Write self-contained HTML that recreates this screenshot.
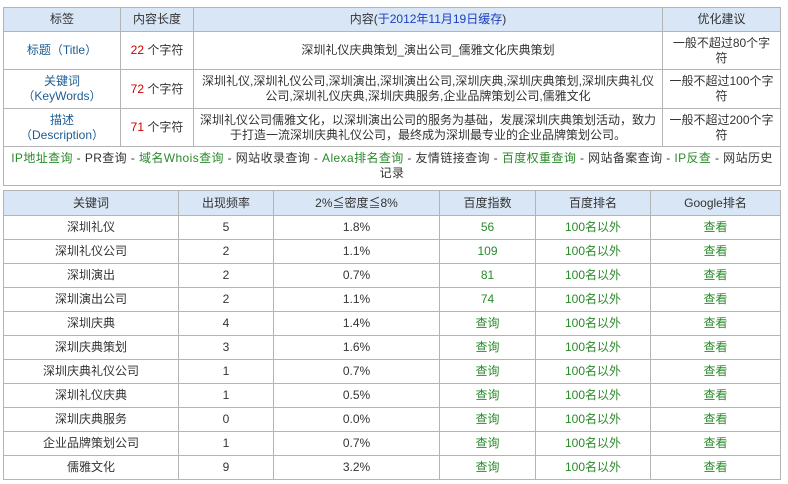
<!DOCTYPE html>
<html><head><meta charset="utf-8"><style>
body{margin:0;background:#fff;font-family:"Liberation Sans","Noto Sans CJK SC",sans-serif;font-size:12px;color:#333}
table{border-collapse:collapse;position:absolute;left:3px;table-layout:fixed}
td,th{border:1px solid #b4b4b4;text-align:center;font-weight:normal;padding:0 4px;line-height:15px}
th{background:#d8e6f6;color:#333}
.b{color:#1c5c94}.r{color:#c00}.g{color:#2a8a2a}
#t1{top:7px;width:777px}
#t2{top:190px;width:777px}
#t2 td,#t2 th{height:23px;padding:0}
#t2 th{height:24px}
</style></head><body>
<table id="t1">
<colgroup><col style="width:117px"><col style="width:73px"><col style="width:469px"><col style="width:118px"></colgroup>
<tr style="height:24px"><th>标签</th><th>内容长度</th><th>内容(<span style="color:#1a3fc0">于2012年11月19日缓存</span>)</th><th>优化建议</th></tr>
<tr style="height:38px"><td class="b">标题（Title）</td><td><span class="r">22</span> 个字符</td><td>深圳礼仪庆典策划_演出公司_儒雅文化庆典策划</td><td>一般不超过80个字符</td></tr>
<tr style="height:39px"><td class="b">关键词<br>（KeyWords）</td><td><span class="r">72</span> 个字符</td><td>深圳礼仪,深圳礼仪公司,深圳演出,深圳演出公司,深圳庆典,深圳庆典策划,深圳庆典礼仪公司,深圳礼仪庆典,深圳庆典服务,企业品牌策划公司,儒雅文化</td><td>一般不超过100个字符</td></tr>
<tr style="height:38px"><td class="b">描述<br>（Description）</td><td><span class="r">71</span> 个字符</td><td>深圳礼仪公司儒雅文化，以深圳演出公司的服务为基础，发展深圳庆典策划活动，致力于打造一流深圳庆典礼仪公司，最终成为深圳最专业的企业品牌策划公司。</td><td>一般不超过200个字符</td></tr>
<tr style="height:39px"><td colspan="4" style="text-align:center;padding:0 6px;letter-spacing:0.4px"><span class="g">IP地址查询</span> - PR查询 - <span class="g">域名Whois查询</span> - 网站收录查询 - <span class="g">Alexa排名查询</span> - 友情链接查询 - <span class="g">百度权重查询</span> - 网站备案查询 - <span class="g">IP反查</span> - 网站历史记录</td></tr>
</table>
<table id="t2">
<colgroup><col style="width:175px"><col style="width:95px"><col style="width:166px"><col style="width:96px"><col style="width:115px"><col style="width:130px"></colgroup>
<tr><th>关键词</th><th>出现频率</th><th>2%≦密度≦8%</th><th>百度指数</th><th>百度排名</th><th>Google排名</th></tr>
<tr><td>深圳礼仪</td><td>5</td><td>1.8%</td><td class="g">56</td><td class="g">100名以外</td><td class="g">查看</td></tr>
<tr><td>深圳礼仪公司</td><td>2</td><td>1.1%</td><td class="g">109</td><td class="g">100名以外</td><td class="g">查看</td></tr>
<tr><td>深圳演出</td><td>2</td><td>0.7%</td><td class="g">81</td><td class="g">100名以外</td><td class="g">查看</td></tr>
<tr><td>深圳演出公司</td><td>2</td><td>1.1%</td><td class="g">74</td><td class="g">100名以外</td><td class="g">查看</td></tr>
<tr><td>深圳庆典</td><td>4</td><td>1.4%</td><td class="g">查询</td><td class="g">100名以外</td><td class="g">查看</td></tr>
<tr><td>深圳庆典策划</td><td>3</td><td>1.6%</td><td class="g">查询</td><td class="g">100名以外</td><td class="g">查看</td></tr>
<tr><td>深圳庆典礼仪公司</td><td>1</td><td>0.7%</td><td class="g">查询</td><td class="g">100名以外</td><td class="g">查看</td></tr>
<tr><td>深圳礼仪庆典</td><td>1</td><td>0.5%</td><td class="g">查询</td><td class="g">100名以外</td><td class="g">查看</td></tr>
<tr><td>深圳庆典服务</td><td>0</td><td>0.0%</td><td class="g">查询</td><td class="g">100名以外</td><td class="g">查看</td></tr>
<tr><td>企业品牌策划公司</td><td>1</td><td>0.7%</td><td class="g">查询</td><td class="g">100名以外</td><td class="g">查看</td></tr>
<tr><td>儒雅文化</td><td>9</td><td>3.2%</td><td class="g">查询</td><td class="g">100名以外</td><td class="g">查看</td></tr>
</table>
</body></html>
